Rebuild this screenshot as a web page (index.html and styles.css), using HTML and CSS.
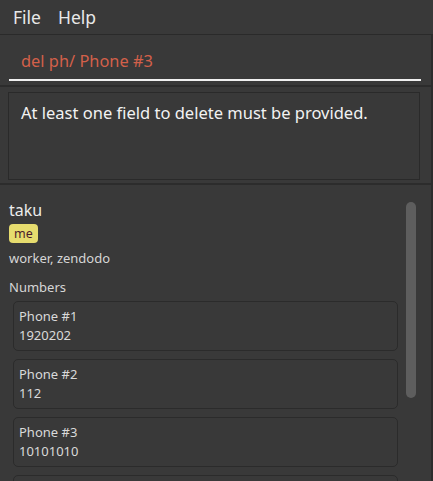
FILE: index.html
```html
<!DOCTYPE html>
<html>
<head>
<meta charset="utf-8">
<link rel="stylesheet" href="styles.css">
</head>
<body>
<div class="app">
  <div class="menubar">
    <span class="menu-item">File</span>
    <span class="menu-item">Help</span>
  </div>
  <div class="main">
    <div class="command-pane">
      <div class="command-field">del ph/ Phone #3</div>
    </div>
    <div class="result-pane">
      <div class="result-box">At least one field to delete must be provided.</div>
    </div>
    <div class="list-pane">
      <div class="person">
        <div class="name">taku</div>
        <div class="tags"><span class="tag">me</span></div>
        <div class="groups">worker, zendodo</div>
        <div class="section-label">Numbers</div>
        <div class="cards">
          <div class="card"><div class="card-label">Phone #1</div><div class="card-value">1920202</div></div>
          <div class="card"><div class="card-label">Phone #2</div><div class="card-value">112</div></div>
          <div class="card"><div class="card-label">Phone #3</div><div class="card-value">10101010</div></div>
          <div class="card"></div>
        </div>
      </div>
      <div class="scrollbar"><div class="thumb"></div></div>
    </div>
  </div>
</div>
</body>
</html>
```
FILE: styles.css
```css
html, body {
  margin: 0;
  padding: 0;
  background: #393939;
  height: 100%;
  overflow: hidden;
}
.app {
  font-family: "Noto Sans", "Open Sans", sans-serif;
  color: #e6e6e6;
  display: flex;
  flex-direction: column;
  height: 481px;
}
.menubar {
  height: 35px;
  box-sizing: border-box;
  display: flex;
  align-items: center;
  gap: 17px;
  padding-left: 13px;
  font-size: 17.5px;
  color: #e8e8e8;
  border-bottom: 1px solid #2a2a2a;
}
.main {
  flex: 1;
  display: flex;
  flex-direction: column;
  border-right: 2px solid #2c2c2c;
  min-height: 0;
}
.command-pane {
  height: 52px;
  padding: 0 10px 0 9px;
  box-sizing: border-box;
  border-bottom: 2px solid #2c2c2c;
}
.command-field {
  height: 46px;
  box-sizing: border-box;
  padding: 14px 0 0 12px;
  font-size: 16.4px;
  color: #d3604a;
  border-bottom: 2px solid #f0f0f0;
}
.result-pane {
  height: 98px;
  box-sizing: border-box;
  padding: 5px 11px 0 8px;
  border-bottom: 2px solid #2c2c2c;
}
.result-box {
  height: 88px;
  box-sizing: border-box;
  border: 1px solid #2a2a2a;
  padding: 8px 12px;
  font-size: 16.5px;
  color: #f2f2f2;
}
.list-pane {
  flex: 1;
  display: flex;
  min-height: 0;
  overflow: hidden;
}
.person {
  flex: 1;
  padding: 14px 0 0 9px;
}
.name {
  font-size: 16px;
  line-height: 22px;
  color: #ececec;
}
.tags {
  display: flex;
  margin-top: 3px;
}
.tag {
  background: #e6dc6e;
  color: #4a1a2a;
  font-size: 12.5px;
  line-height: 19px;
  padding: 0 5px;
  border-radius: 4px;
}
.groups {
  margin-top: 6px;
  font-size: 13px;
  line-height: 18px;
  color: #d6d6d6;
}
.section-label {
  margin-top: 11px;
  font-size: 13px;
  line-height: 18px;
  color: #d6d6d6;
}
.cards {
  margin: 5px 0 0 4px;
  display: flex;
  flex-direction: column;
  gap: 8px;
}
.card {
  height: 50px;
  flex-shrink: 0;
  box-sizing: border-box;
  border: 1px solid #2b2b2b;
  border-radius: 5px;
  padding: 5px 0 0 5px;
  font-size: 13px;
  line-height: 19px;
  color: #dadada;
}
.scrollbar {
  padding: 17px 15px 0 8px;
}
.thumb {
  width: 10px;
  height: 196px;
  background: #5e5e5e;
  border-radius: 5px;
}
```
